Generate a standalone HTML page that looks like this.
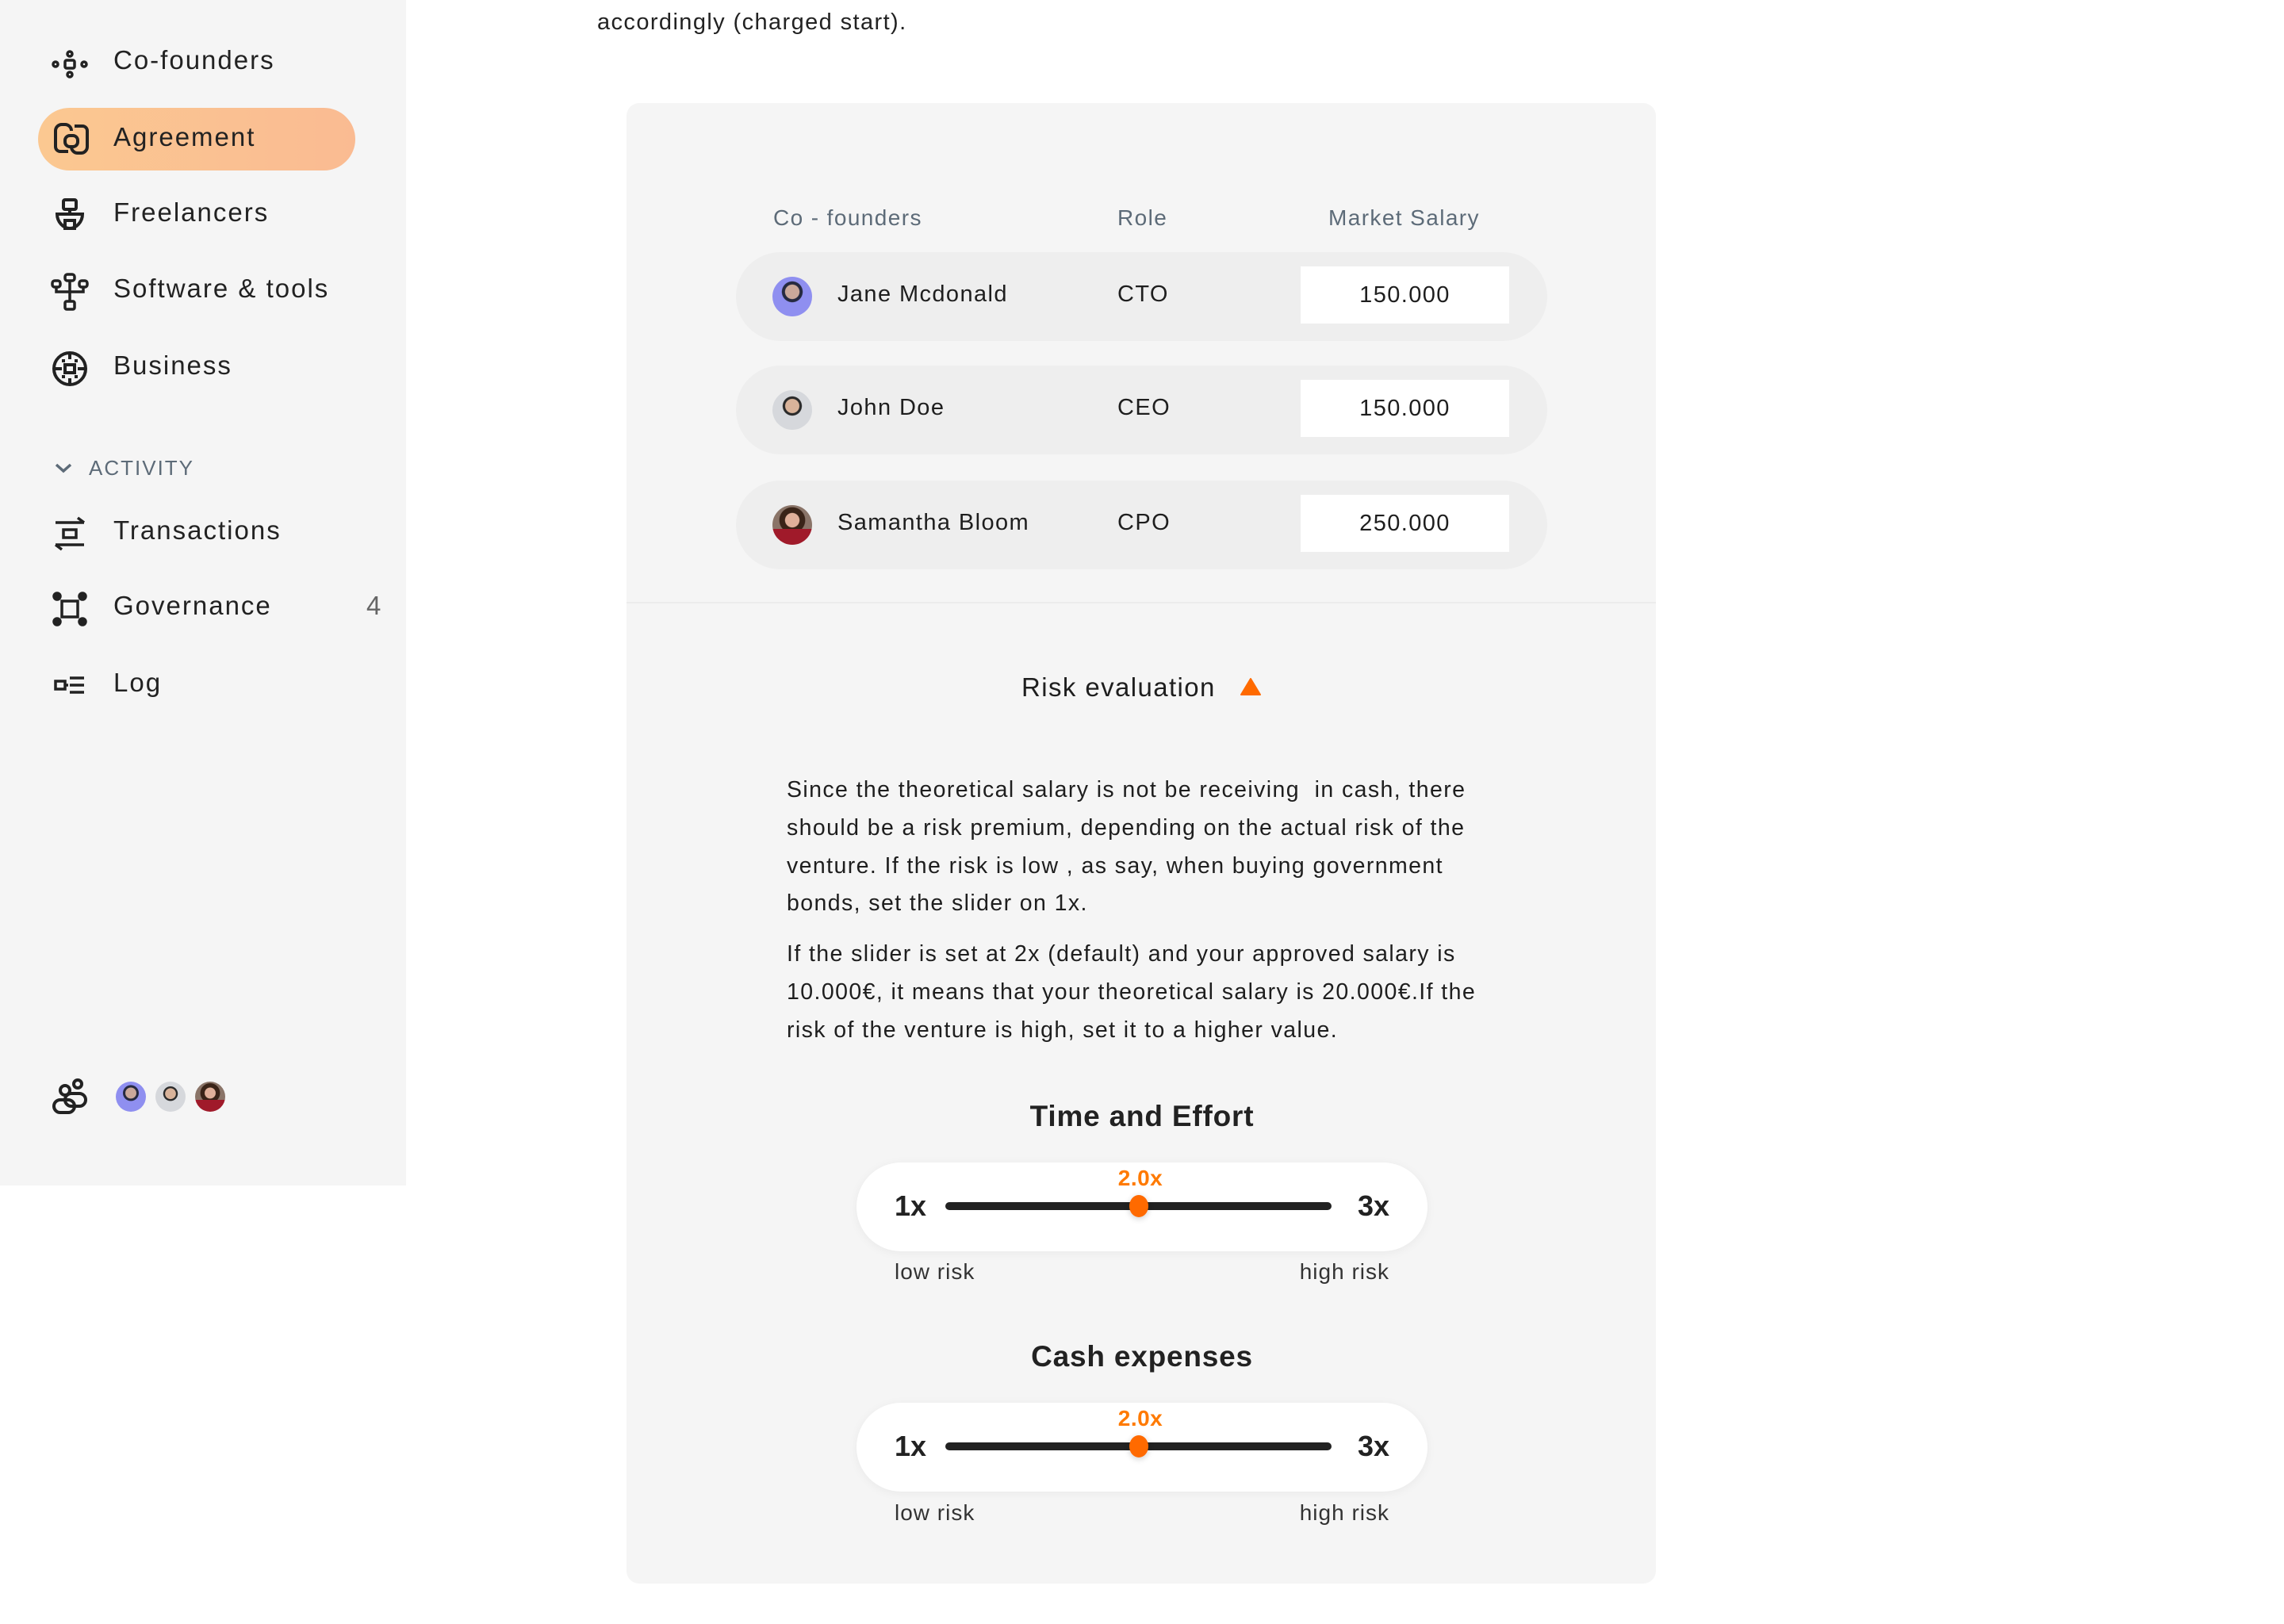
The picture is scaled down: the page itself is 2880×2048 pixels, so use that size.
<!DOCTYPE html>
<html><head><meta charset="utf-8"><style>
*{margin:0;padding:0;box-sizing:border-box}
body{width:2880px;height:2048px;background:#fff;font-family:"Liberation Sans",sans-serif;color:#1e1e1e;position:relative;overflow:hidden;letter-spacing:1.4px}
.a{position:absolute;white-space:nowrap}
#side{position:absolute;left:0;top:0;width:512px;height:1495px;background:#f5f5f5}
.nav{font-size:33px;color:#222;line-height:40px;letter-spacing:2px}
.ic{position:absolute;width:48px;height:48px}
.card{position:absolute;left:790px;top:130px;width:1298px;height:1867px;background:#f5f5f5;border-radius:16px}
.th{font-size:28px;color:#5d6b78}
.row{position:absolute;left:928px;width:1023px;height:112px;background:#eeeeee;border-radius:56px}
.av{position:absolute;border-radius:50%;overflow:hidden}
.nm{font-size:29px;color:#1e1e1e}
.inp{position:absolute;left:1640px;width:263px;height:72px;background:#fff;font-size:29px;text-align:center;line-height:72px;color:#1e1e1e}
.p{font-size:28.5px;line-height:47.8px;color:#1e1e1e}
.h{font-size:37px;font-weight:bold;color:#222;text-align:center;width:600px;left:1140px;letter-spacing:0.8px}
.pill{position:absolute;left:1080px;width:720px;height:112px;background:#fff;border-radius:56px;box-shadow:0 2px 12px rgba(0,0,0,.05)}
.big{font-size:36px;font-weight:bold;color:#222;letter-spacing:0}
.trk{position:absolute;left:1192px;width:487px;height:10px;background:#222;border-radius:5px}
.th2{position:absolute;left:1424px;width:24px;height:28px;border-radius:50%;background:#ff6a00;box-shadow:0 2px 8px rgba(0,0,0,.2)}
.val{font-size:28px;color:#ff7a00;font-weight:bold;width:100px;text-align:center;left:1388px;letter-spacing:0.5px}
.sm{font-size:28px;color:#333;letter-spacing:1px}
</style></head><body>
<div id="side">
 <svg class="ic" style="left:64px;top:56px" viewBox="0 0 48 48" fill="none" stroke="#222" stroke-width="3.5"><circle cx="6" cy="25" r="3"/><circle cx="42" cy="25" r="3"/><circle cx="24" cy="12" r="3"/><circle cx="24" cy="38" r="3"/><rect x="18" y="20" width="12" height="10" rx="2"/></svg>
 <div class="a nav" style="left:143px;top:56px">Co-founders</div>
 <div style="position:absolute;left:48px;top:136px;width:400px;height:79px;border-radius:40px;background:linear-gradient(90deg,#fbc891,#fabb92)"></div>
 <svg class="ic" style="left:66px;top:151px" viewBox="0 0 48 48" fill="none" stroke="#222" stroke-width="4"><path d="M20 40H10a6 6 0 0 1-6-6V14a8 8 0 0 1 8-8h4a8 8 0 0 1 8 8"/><path d="M28 8h10a6 6 0 0 1 6 6v20a8 8 0 0 1-8 8h-4a8 8 0 0 1-8-8"/><rect x="16" y="20" width="16" height="14" rx="6"/></svg>
 <div class="a nav" style="left:143px;top:153px">Agreement</div>
 <svg class="ic" style="left:64px;top:248px" viewBox="0 0 48 48" fill="none" stroke="#222" stroke-width="4"><rect x="16" y="4" width="16" height="12" rx="2"/><path d="M24 16v6M8 22h32c0 10-8 18-16 18S8 32 8 22z"/><rect x="18" y="30" width="12" height="10"/></svg>
 <div class="a nav" style="left:143px;top:248px">Freelancers</div>
 <svg class="ic" style="left:64px;top:344px" viewBox="0 0 48 48" fill="none" stroke="#222" stroke-width="3.5"><rect x="18" y="2" width="12" height="8" rx="3"/><rect x="2" y="10" width="10" height="8" rx="3"/><rect x="36" y="10" width="10" height="8" rx="3"/><rect x="18" y="36" width="12" height="10" rx="2"/><path d="M24 10v26M7 18v6h34v-6"/></svg>
 <div class="a nav" style="left:143px;top:344px">Software &amp; tools</div>
 <svg class="ic" style="left:64px;top:441px" viewBox="0 0 48 48" fill="none" stroke="#222" stroke-width="4"><circle cx="24" cy="24" r="20"/><rect x="18" y="19" width="12" height="10"/><path d="M24 4v8M24 36v8M4 24h10M34 24h10M16 12v4M32 12v4M16 32v4M32 32v4"/></svg>
 <div class="a nav" style="left:143px;top:441px">Business</div>
 <svg class="a" style="left:68px;top:582px" width="24" height="16" viewBox="0 0 24 16" fill="none" stroke="#5d6b78" stroke-width="3.5"><path d="M3 4l9 8 9-8"/></svg>
 <div class="a" style="left:112px;top:575px;font-size:26px;color:#5d6b78;letter-spacing:2px">ACTIVITY</div>
 <svg class="ic" style="left:64px;top:649px" viewBox="0 0 48 48" fill="none" stroke="#222" stroke-width="3.5"><path d="M6 10h36M34 4l8 6M6 38h36M6 38l8 6"/><rect x="16" y="19" width="16" height="10"/></svg>
 <div class="a nav" style="left:143px;top:649px">Transactions</div>
 <svg class="ic" style="left:64px;top:744px" viewBox="0 0 48 48" fill="none" stroke="#222" stroke-width="3.5"><rect x="14" y="14" width="20" height="20"/><circle cx="8" cy="8" r="4" fill="#222"/><circle cx="40" cy="8" r="4" fill="#222"/><circle cx="8" cy="40" r="4" fill="#222"/><circle cx="40" cy="40" r="4" fill="#222"/></svg>
 <div class="a nav" style="left:143px;top:744px">Governance</div>
 <div class="a nav" style="left:462px;top:744px;color:#666">4</div>
 <svg class="ic" style="left:64px;top:841px" viewBox="0 0 48 48" fill="none" stroke="#222" stroke-width="3.5"><rect x="6" y="18" width="12" height="10"/><path d="M18 23h4M24 14h18M24 23h18M24 32h18"/></svg>
 <div class="a nav" style="left:143px;top:841px">Log</div>
 <svg class="ic" style="left:64px;top:1359px" viewBox="0 0 48 48" fill="none" stroke="#222" stroke-width="4"><circle cx="34" cy="8" r="5"/><circle cx="18" cy="16" r="6"/><rect x="4" y="28" width="26" height="16" rx="8"/><rect x="18" y="20" width="26" height="16" rx="8"/></svg>
 <div class="av" style="left:146px;top:1364px;width:38px;height:38px;background:radial-gradient(circle at 50% 38%,#caa89a 0 22%,#262a40 24% 32%,#8f8ff0 34%)"></div>
 <div class="av" style="left:196px;top:1364px;width:38px;height:38px;background:radial-gradient(circle at 50% 40%,#d9b39a 0 22%,#2a2a2a 24% 30%,#d6d8dc 32%)"></div>
 <div class="av" style="left:246px;top:1364px;width:38px;height:38px;background:linear-gradient(#0000 60%,#a01a2a 60%),radial-gradient(circle at 50% 38%,#e0b09a 0 22%,#3a2418 24% 40%,#8a7468 42%)"></div>
</div>

<div class="a" style="left:753px;top:12px;font-size:29px;color:#222">accordingly (charged start).</div>

<div class="card"></div>
<div class="a th" style="left:975px;top:259px">Co - founders</div>
<div class="a th" style="left:1409px;top:259px">Role</div>
<div class="a th" style="left:1675px;top:259px">Market Salary</div>

<div class="row" style="top:318px"></div>
<div class="av" style="left:974px;top:349px;width:50px;height:50px;background:radial-gradient(circle at 50% 38%,#caa89a 0 22%,#262a40 24% 32%,#8f8ff0 34%)"></div>
<div class="a nm" style="left:1056px;top:355px">Jane Mcdonald</div>
<div class="a nm" style="left:1409px;top:355px">CTO</div>
<div class="inp" style="top:336px">150.000</div>

<div class="row" style="top:461px"></div>
<div class="av" style="left:974px;top:492px;width:50px;height:50px;background:radial-gradient(circle at 50% 40%,#d9b39a 0 22%,#2a2a2a 24% 30%,#d6d8dc 32%)"></div>
<div class="a nm" style="left:1056px;top:498px">John Doe</div>
<div class="a nm" style="left:1409px;top:498px">CEO</div>
<div class="inp" style="top:479px">150.000</div>

<div class="row" style="top:606px"></div>
<div class="av" style="left:974px;top:637px;width:50px;height:50px;background:linear-gradient(#0000 60%,#a01a2a 60%),radial-gradient(circle at 50% 38%,#e0b09a 0 22%,#3a2418 24% 40%,#8a7468 42%)"></div>
<div class="a nm" style="left:1056px;top:643px">Samantha Bloom</div>
<div class="a nm" style="left:1409px;top:643px">CPO</div>
<div class="inp" style="top:624px">250.000</div>

<div class="a" style="left:790px;top:759px;width:1298px;height:2px;background:#ececec"></div>

<div class="a" style="left:1288px;top:848px;font-size:33px;color:#1e1e1e">Risk evaluation</div>
<svg class="a" style="left:1563px;top:854px" width="28" height="24" viewBox="0 0 28 24"><path d="M14 2L26 22H2z" fill="#ff6a00" stroke="#ff6a00" stroke-width="2" stroke-linejoin="round"/></svg>

<div class="a p" style="left:992px;top:973px">Since the theoretical salary is not be receiving&nbsp; in cash, there<br>should be a risk premium, depending on the actual risk of the<br>venture. If the risk is low , as say, when buying government<br>bonds, set the slider on 1x.</div>
<div class="a p" style="left:992px;top:1180px">If the slider is set at 2x (default) and your approved salary is<br>10.000€, it means that your theoretical salary is 20.000€.If the<br>risk of the venture is high, set it to a higher value.</div>

<div class="a h" style="top:1387px">Time and Effort</div>
<div class="pill" style="top:1466px"></div>
<div class="a val" style="top:1470px">2.0x</div>
<div class="a big" style="left:1128px;top:1500px">1x</div>
<div class="a big" style="left:1712px;top:1500px">3x</div>
<div class="trk" style="top:1516px"></div>
<div class="th2" style="top:1507px"></div>
<div class="a sm" style="left:1128px;top:1588px">low risk</div>
<div class="a sm" style="left:1632px;top:1588px;width:120px;text-align:right">high risk</div>

<div class="a h" style="top:1690px">Cash expenses</div>
<div class="pill" style="top:1769px"></div>
<div class="a val" style="top:1773px">2.0x</div>
<div class="a big" style="left:1128px;top:1803px">1x</div>
<div class="a big" style="left:1712px;top:1803px">3x</div>
<div class="trk" style="top:1819px"></div>
<div class="th2" style="top:1810px"></div>
<div class="a sm" style="left:1128px;top:1892px">low risk</div>
<div class="a sm" style="left:1632px;top:1892px;width:120px;text-align:right">high risk</div>
</body></html>
